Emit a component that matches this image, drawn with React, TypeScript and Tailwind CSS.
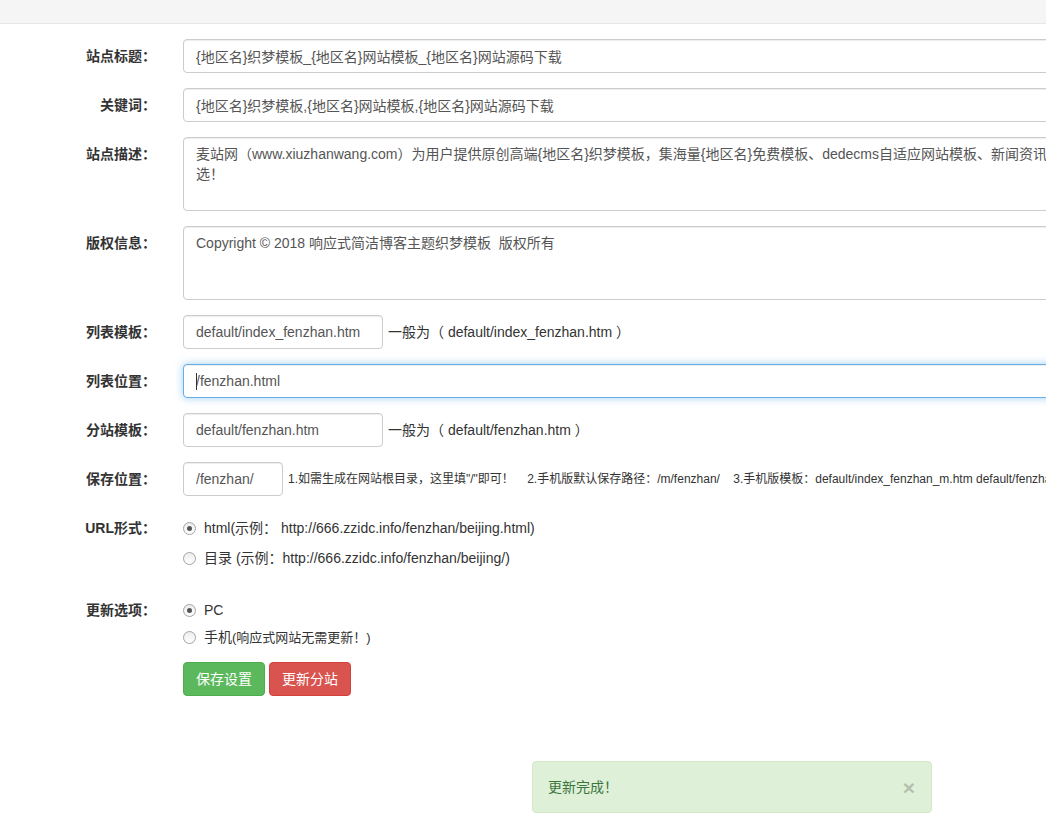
import React from 'react';

const font = { fontFamily: '"Liberation Sans", "Noto Sans CJK SC", sans-serif' };

const inputCls =
  'h-[34px] px-[12px] text-[14px] text-[#555] bg-white border border-[#ccc] rounded-[4px] shadow-[inset_0_1px_1px_rgba(0,0,0,0.075)] outline-none';

function Label({ children }: { children: React.ReactNode }) {
  return (
    <div className="w-[168px] shrink-0 pr-[12px] pt-[7px] text-right text-[14px] leading-[20px] font-bold text-[#333]">
      {children}
    </div>
  );
}

function Row({ label, children, className = '' }: { label: string; children: React.ReactNode; className?: string }) {
  return (
    <div className={`flex ${className}`}>
      <Label>{label}</Label>
      <div className="pl-[15px] flex-1">{children}</div>
    </div>
  );
}

function Radio({ checked, children }: { checked?: boolean; children: React.ReactNode }) {
  return (
    <label className="flex items-center h-[20px] text-[14px] text-[#333]">
      <span className="w-[13px] h-[13px] rounded-full border border-[#a3a3a3] bg-gradient-to-b from-[#ededed] to-white flex items-center justify-center shrink-0">
        {checked && <span className="w-[5px] h-[5px] rounded-full bg-[#555]" />}
      </span>
      <span className="ml-[8px]">{children}</span>
    </label>
  );
}

export default function App() {
  const desc =
    '麦站网（www.xiuzhanwang.com）为用户提供原创高端{地区名}织梦模板，集海量{地区名}免费模板、dedecms自适应网站模板、新闻资讯模板等供您挑\n选！';

  return (
    <div className="w-full min-h-[829px] overflow-hidden bg-white relative" style={font}>
      <div className="h-[24px] bg-[#f5f5f5] border-b border-[#e6e6e6]" />

      <div className="w-[1400px] pt-[15px] flex flex-col">
        <Row label="站点标题：" className="mb-[15px]">
          <input readOnly className={`${inputCls} w-full`} defaultValue="{地区名}织梦模板_{地区名}网站模板_{地区名}网站源码下载" />
        </Row>
        <Row label="关键词：" className="mb-[15px]">
          <input readOnly className={`${inputCls} w-full`} defaultValue="{地区名}织梦模板,{地区名}网站模板,{地区名}网站源码下载" />
        </Row>
        <Row label="站点描述：" className="mb-[15px]">
          <textarea
            readOnly
            className="block w-full h-[74px] px-[12px] py-[6px] text-[14px] leading-[20px] text-[#555] bg-white border border-[#ccc] rounded-[4px] shadow-[inset_0_1px_1px_rgba(0,0,0,0.075)] outline-none resize-none overflow-hidden"
            defaultValue={desc}
          />
        </Row>
        <Row label="版权信息：" className="mb-[15px]">
          <textarea
            readOnly
            className="block w-full h-[74px] px-[12px] py-[6px] text-[14px] leading-[20px] text-[#555] bg-white border border-[#ccc] rounded-[4px] shadow-[inset_0_1px_1px_rgba(0,0,0,0.075)] outline-none resize-none overflow-hidden"
            defaultValue="Copyright © 2018 响应式简洁博客主题织梦模板  版权所有"
          />
        </Row>
        <Row label="列表模板：" className="mb-[15px]">
          <div className="flex items-center">
            <input readOnly className={`${inputCls} w-[200px]`} defaultValue="default/index_fenzhan.htm" />
            <span className="ml-[5px] text-[14px] text-[#333]">一般为（ default/index_fenzhan.htm ）</span>
          </div>
        </Row>
        <Row label="列表位置：" className="mb-[15px]">
          <div className="relative">
            <input
              readOnly
              className="h-[34px] w-full px-[12px] text-[14px] text-[#555] bg-white border border-[#66afe9] rounded-[4px] outline-none shadow-[inset_0_1px_1px_rgba(0,0,0,0.075),0_0_8px_rgba(102,175,233,0.6)]"
              defaultValue="/fenzhan.html"
            />
            <span className="absolute left-[13px] top-[9px] w-px h-[17px] bg-[#333]" />
          </div>
        </Row>
        <Row label="分站模板：" className="mb-[15px]">
          <div className="flex items-center">
            <input readOnly className={`${inputCls} w-[200px]`} defaultValue="default/fenzhan.htm" />
            <span className="ml-[5px] text-[14px] text-[#333]">一般为（ default/fenzhan.htm ）</span>
          </div>
        </Row>
        <Row label="保存位置：" className="mb-[15px]">
          <div className="flex items-center">
            <input readOnly className={`${inputCls} w-[100px]`} defaultValue="/fenzhan/" />
            <span className="ml-[5px] text-[12px] text-[#333] whitespace-pre">
              {'1.如需生成在网站根目录，这里填"/"即可！    2.手机版默认保存路径：/m/fenzhan/    3.手机版模板：default/index_fenzhan_m.htm default/fenzhan_m.htm'}
            </span>
          </div>
        </Row>
        <Row label="URL形式：" className="mb-[25px]">
          <div className="pt-[7px] flex flex-col gap-[10px]">
            <Radio checked>html(示例： http://666.zzidc.info/fenzhan/beijing.html)</Radio>
            <Radio>目录 (示例：http://666.zzidc.info/fenzhan/beijing/)</Radio>
          </div>
        </Row>
        <Row label="更新选项：" className="mb-[15px]">
          <div className="pt-[7px] flex flex-col gap-[7px]">
            <Radio checked>PC</Radio>
            <Radio>手机<span className="text-[13px]">(响应式网站无需更新！)</span></Radio>
          </div>
        </Row>
        <Row label="">
          <div className="flex gap-[4px]">
            <button className="h-[34px] w-[82px] text-[14px] text-white bg-[#5cb85c] border border-[#4cae4c] rounded-[4px]">
              保存设置
            </button>
            <button className="h-[34px] w-[82px] text-[14px] text-white bg-[#d9534f] border border-[#d43f3a] rounded-[4px]">
              更新分站
            </button>
          </div>
        </Row>
      </div>

      <div className="absolute left-[532px] top-[761px] w-[400px] h-[52px] px-[15px] flex items-center justify-between bg-[#dff0d8] border border-[#d6e9c6] rounded-[4px] text-[14px] text-[#3c763d]">
        <span>更新完成！</span>
        <span className="text-[21px] font-bold leading-none text-black opacity-20 mr-[1px]">×</span>
      </div>
    </div>
  );
}
